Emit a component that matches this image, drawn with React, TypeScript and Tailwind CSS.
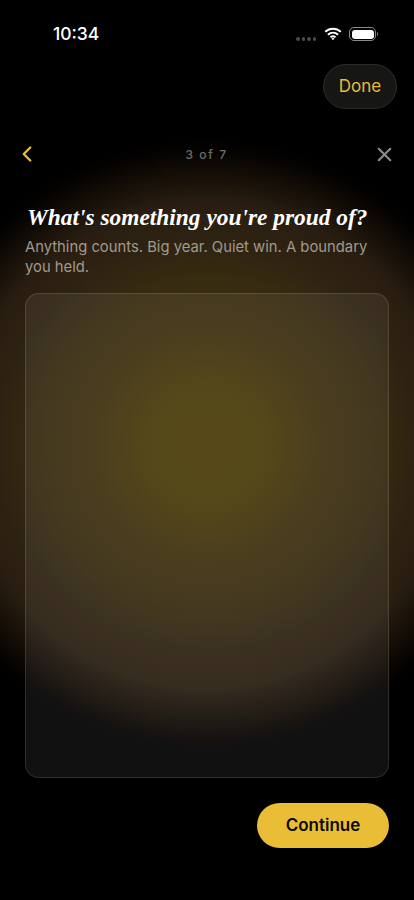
import React from "react"
import { ChevronLeft, X } from "lucide-react"

const sans = "font-['Inter','Liberation_Sans',sans-serif]"

const StatusBar = () => (
  <div className="flex items-center justify-between h-[28px] mt-[20px] pl-[53px] pr-[36px]">
    <span className={`${sans} text-white text-[17.5px] font-medium leading-[28px]`}>10:34</span>
    <div className="flex items-center">
      <div className="flex gap-[2px] mr-[8px] mt-[10px]">
        <span className="w-[3.5px] h-[3.5px] rounded-full bg-[#4a4a4a]" />
        <span className="w-[3.5px] h-[3.5px] rounded-full bg-[#4a4a4a]" />
        <span className="w-[3.5px] h-[3.5px] rounded-full bg-[#4a4a4a]" />
        <span className="w-[3.5px] h-[3.5px] rounded-full bg-[#4a4a4a]" />
      </div>
      <svg width="18" height="14" viewBox="0 0 18 14" fill="none" className="mr-[7px]">
        <path d="M1.2 4.8C5.6.7 12.4.7 16.8 4.8" stroke="#fff" strokeWidth="2" />
        <path d="M3.9 7.7C6.9 5 11.1 5 14.1 7.7" stroke="#fff" strokeWidth="2" />
        <path d="M6.5 10.3C8 9 10 9 11.5 10.3" stroke="#fff" strokeWidth="1.8" />
        <path d="M9 13.2 7.4 11.6c.9-.7 2.3-.7 3.2 0Z" fill="#fff" />
      </svg>
      <div className="w-[27px] h-[14px] rounded-[5px] border border-[#8a8a8a] p-[1.5px]">
        <div className="w-full h-full rounded-[3px] bg-white" />
      </div>
      <div className="w-[1px] h-[4px] ml-[1px] bg-[#7a7a7a] rounded-r-sm" />
    </div>
  </div>
)

export default function App() {
  return (
    <div className="w-[414px] h-[900px] overflow-hidden flex flex-col bg-black bg-[radial-gradient(circle_308px_at_207px_445px,#4a3b08_0%,#483a09_20%,#3f310e_36%,#372b10_54%,#2e2312_67%,#281d10_79%,#130d06_89%,#060301_95%,#000000_100%)]">
      <StatusBar />

      <div className="flex justify-end pr-[17px] mt-[16px]">
        <button className={`${sans} w-[74px] h-[45px] rounded-full bg-[#161614] border border-[#2c2c2a] text-[#e9bd36] text-[17px]`}>
          Done
        </button>
      </div>

      <div className="flex items-center justify-between h-[24px] mt-[33px] pl-[14px] pr-[18px]">
        <ChevronLeft size={26} strokeWidth={2.2} className="text-[#e9bd36]" />
        <span className={`${sans} text-[#6e6e6c] text-[12px] font-medium tracking-[1.6px] mt-[2px]`}>3 of 7</span>
        <X size={23} strokeWidth={2.2} className="text-[#8c8c8a]" />
      </div>

      <div className="flex-1 flex flex-col px-[25px] pb-[52px]">
        <h1 className="mt-[35px] ml-[2px] font-['Liberation_Serif',serif] italic font-bold text-white text-[23.4px] leading-[32px] whitespace-nowrap">
          What's something you're proud of?
        </h1>
        <p className={`${sans} mt-[4px] text-[#a09a8e] text-[14.8px] leading-[20px]`}>
          Anything counts. Big year. Quiet win. A boundary you held.
        </p>
        <div className="mt-[16px] flex-1 rounded-[14px] bg-white/[0.065] border border-[#ffdc96]/[0.14]" />
        <div className="flex justify-end mt-[25px]">
          <button className={`${sans} w-[132px] h-[45px] rounded-full bg-[#e9bd36] text-[#0c0a04] text-[17px] font-semibold`}>
            Continue
          </button>
        </div>
      </div>
    </div>
  )
}
